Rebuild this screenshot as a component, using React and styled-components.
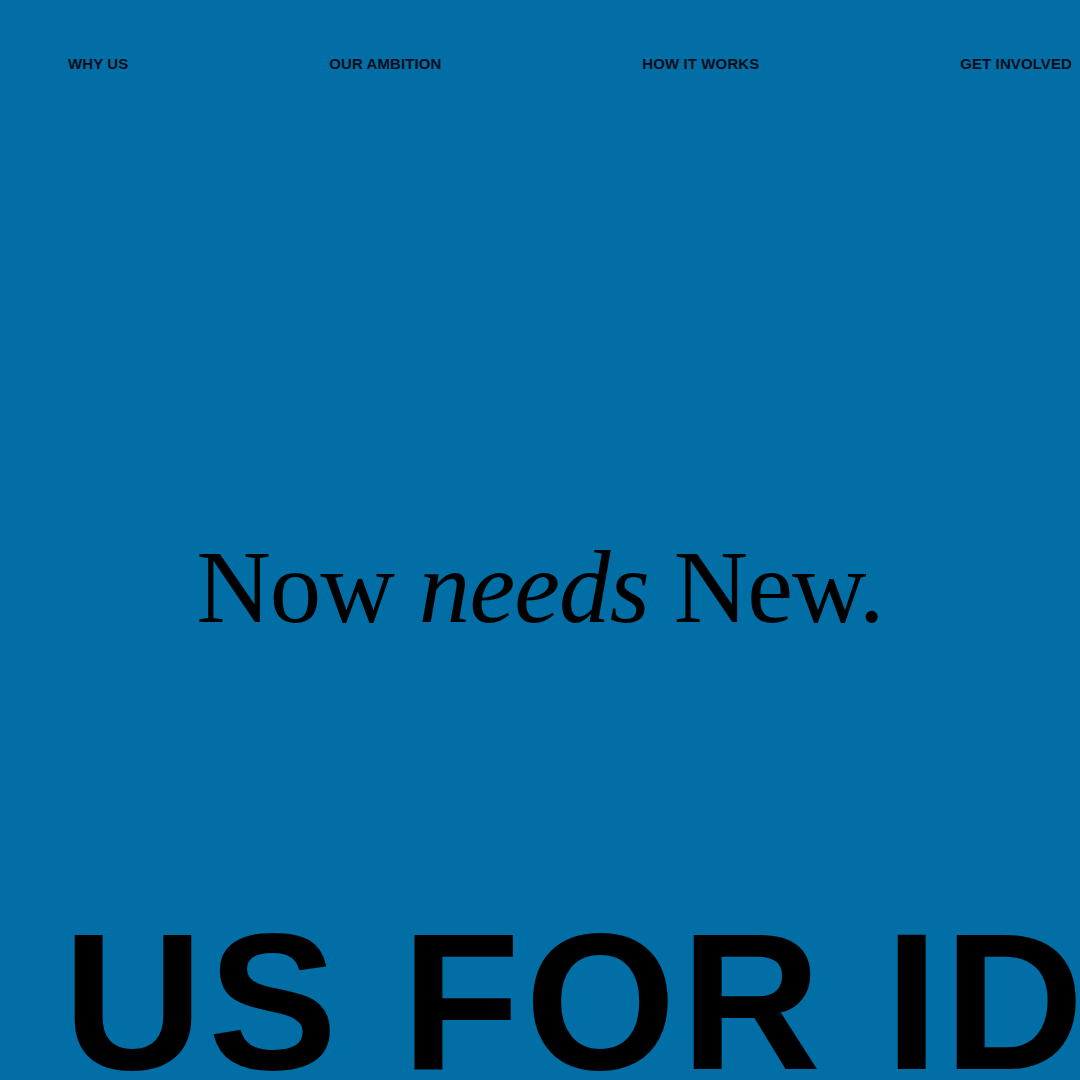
import React from "react";
import styled, { createGlobalStyle } from "styled-components";

const Global = createGlobalStyle`
  html, body { margin: 0; padding: 0; background: #016FA6; }
  #root { width: 1080px; height: 1080px; }
`;

const Page = styled.main`
  width: 1080px;
  height: 1080px;
  overflow: hidden;
  background: #016FA6;
  display: flex;
  flex-direction: column;
`;

const Nav = styled.nav`
  display: flex;
  justify-content: space-between;
  align-items: center;
  padding: 55px 8px 0 68px;
`;

const NavLink = styled.a`
  font-family: "Liberation Sans", Arial, sans-serif;
  font-weight: 700;
  font-size: 15px;
  letter-spacing: 0.1px;
  color: #060d1c;
  text-decoration: none;
  text-transform: uppercase;
`;

const Hero = styled.section`
  flex: 1;
  display: flex;
  justify-content: center;
  align-items: flex-start;
  padding-top: 464px;
`;

const Headline = styled.h1`
  margin: 0;
  font-family: "Liberation Serif", "Times New Roman", serif;
  font-weight: 400;
  font-size: 103px;
  line-height: 1;
  letter-spacing: -0.9px;
  color: #000;
  white-space: nowrap;

  em {
    font-style: italic;
  }
`;

const Marquee = styled.div`
  flex: none;
  height: 200px;
  margin-bottom: -22px;
  overflow: hidden;
  white-space: nowrap;
`;

const Track = styled.div`
  display: inline-block;
  font-family: "Liberation Sans", Arial, sans-serif;
  font-weight: 700;
  font-size: 194px;
  line-height: 200px;
  letter-spacing: 5px;
  font-kerning: none;
  color: #000;
  margin-left: ${(p) => p.$offset}px;
`;

export default function App() {
  return (
    <>
      <Global />
      <Page>
        <Nav>
          <NavLink href="#">Why us</NavLink>
          <NavLink href="#">Our ambition</NavLink>
          <NavLink href="#">How it works</NavLink>
          <NavLink href="#">Get involved</NavLink>
        </Nav>
        <Hero>
          <Headline>
            Now <em>needs</em> New.
          </Headline>
        </Hero>
        <Marquee>
          <Track $offset={-141}>A US FOR IDEAS</Track>
        </Marquee>
      </Page>
    </>
  );
}
